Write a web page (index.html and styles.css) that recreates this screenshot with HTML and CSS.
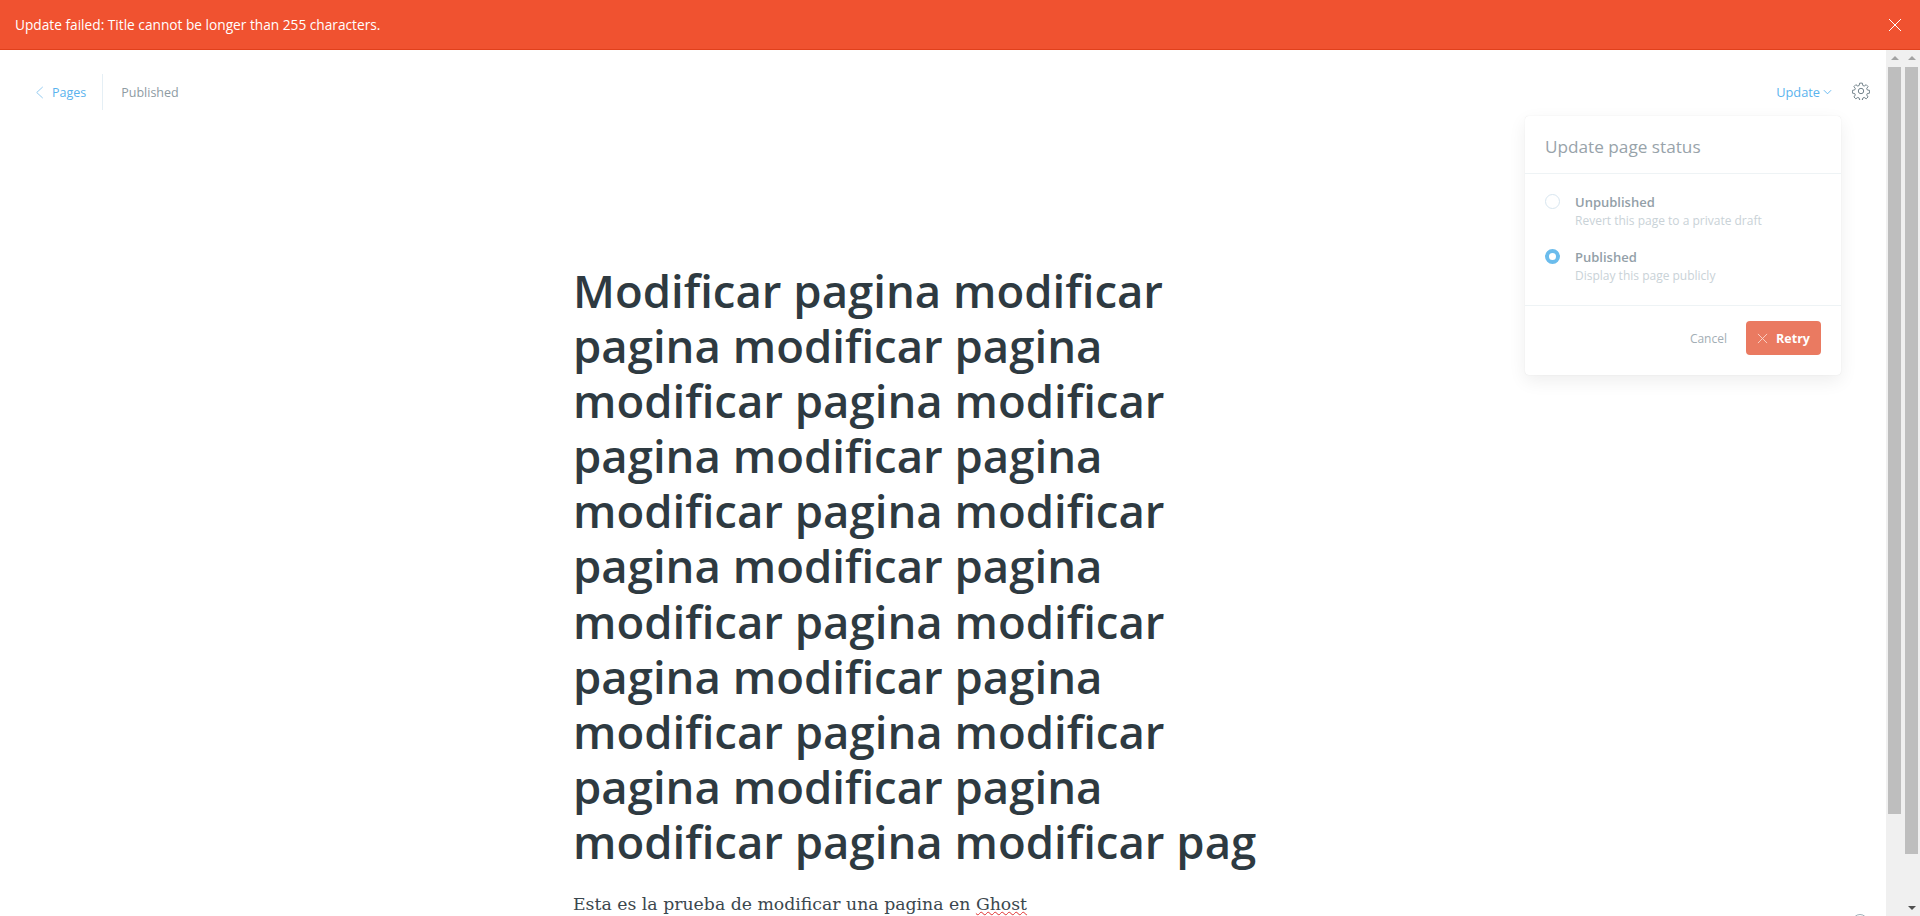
FILE: index.html
```html
<!DOCTYPE html>
<html lang="en">
<head>
    <meta charset="UTF-8">
    <meta name="viewport" content="width=device-width, initial-scale=1.0">
    <title>Edit page</title>
    <link rel="stylesheet" href="styles.css">
</head>
<body>
    <div class="alert">
        <span class="alert-text">Update failed: Title cannot be longer than 255 characters.</span>
        <svg class="alert-close" viewBox="0 0 14 14"><path d="M1 1l12 12M13 1L1 13"/></svg>
    </div>

    <div class="workspace">
        <main class="editor">
            <header class="editor-bar">
                <div class="crumbs">
                    <a class="back-link" href="#">
                        <svg class="back-icon" viewBox="0 0 9 14"><path d="M8 1L1.5 7 8 13"/></svg>
                        Pages
                    </a>
                    <span class="status">Published</span>
                </div>
                <div class="actions">
                    <a class="update-link" href="#">
                        Update
                        <svg class="update-icon" viewBox="0 0 10 6"><path d="M1 1l4 4 4-4"/></svg>
                    </a>
                    <svg class="gear" viewBox="0 0 24 24">
                        <circle cx="12" cy="12" r="3.6"/>
                        <path d="M10.2 1.5h3.6l.6 3.1 1.9.8 2.6-1.8 2.5 2.5-1.8 2.6.8 1.9 3.1.6v3.6l-3.1.6-.8 1.9 1.8 2.6-2.5 2.5-2.6-1.8-1.9.8-.6 3.1h-3.6l-.6-3.1-1.9-.8-2.6 1.8-2.5-2.5 1.8-2.6-.8-1.9-3.1-.6v-3.6l3.1-.6.8-1.9-1.8-2.6 2.5-2.5 2.6 1.8 1.9-.8z"/>
                    </svg>
                </div>
            </header>

            <article class="page-body">
                <h1 class="page-title">Modificar pagina modificar pagina modificar pagina modificar pagina modificar pagina modificar pagina modificar pagina modificar pagina modificar pagina modificar pagina modificar pagina modificar pagina modificar pagina modificar pagina modificar pagina modificar pagina modificar pag</h1>
                <p class="page-text">Esta es la prueba de modificar una pagina en <span class="misspelled">Ghost</span></p>
            </article>

            <section class="publish-menu">
                <h2 class="publish-title">Update page status</h2>
                <div class="publish-options">
                    <div class="option">
                        <span class="radio"></span>
                        <div>
                            <div class="option-name">Unpublished</div>
                            <div class="option-desc">Revert this page to a private draft</div>
                        </div>
                    </div>
                    <div class="option">
                        <span class="radio radio-on"></span>
                        <div>
                            <div class="option-name">Published</div>
                            <div class="option-desc">Display this page publicly</div>
                        </div>
                    </div>
                </div>
                <div class="publish-footer">
                    <button class="btn-cancel">Cancel</button>
                    <button class="btn-retry">
                        <svg class="retry-icon" viewBox="0 0 12 12"><path d="M1 1l10 10M11 1L1 11"/></svg>
                        Retry
                    </button>
                </div>
            </section>

            <span class="help-dot"></span>
        </main>

        <div class="scrollbars">
            <div class="scrollbar">
                <span class="arrow-up"></span>
                <div class="thumb thumb-short"></div>
            </div>
            <div class="scrollbar">
                <span class="arrow-up"></span>
                <div class="thumb thumb-long"></div>
                <span class="arrow-down"></span>
            </div>
        </div>
    </div>
</body>
</html>
```

FILE: styles.css
```css
html, body {
    margin: 0;
    height: 100%;
    overflow: hidden;
}
body {
    font-family: "Open Sans", "Noto Sans", sans-serif;
    background-color: white;
    color: #2e3a41;
}
a {
    text-decoration: none;
}

/* red banner */
.alert {
    height: 49px;
    background-color: #f05230;
    border-bottom: 1px solid #e0401c;
    display: flex;
    align-items: center;
    justify-content: space-between;
    padding: 0 18px 0 15px;
    color: white;
    font-size: 13.7px;
}
.alert-close {
    width: 14px;
    height: 14px;
    fill: none;
    stroke: white;
    stroke-width: 1;
}

.workspace {
    display: flex;
    height: 866px;
}
.editor {
    flex: 1;
    position: relative;
    overflow: hidden;
}

/* top bar */
.editor-bar {
    display: flex;
    justify-content: space-between;
    align-items: center;
    height: 36px;
    padding: 24px 16px 0 35px;
    font-size: 12.5px;
}
.crumbs {
    display: flex;
    align-items: center;
    height: 36px;
}
.back-link {
    display: flex;
    align-items: center;
    gap: 8px;
    color: #5ab3ee;
    padding-right: 16px;
    height: 36px;
    border-right: 1px solid #e5eff5;
}
.back-icon {
    width: 9px;
    height: 13px;
    fill: none;
    stroke: #8cc8f0;
    stroke-width: 1;
}
.status {
    margin-left: 18px;
    color: #8e9ba3;
}
.actions {
    display: flex;
    align-items: center;
    gap: 20px;
}
.update-link {
    display: flex;
    align-items: center;
    gap: 3px;
    color: #5ab3ee;
    font-size: 12.8px;
}
.update-icon {
    width: 9px;
    height: 6px;
    fill: none;
    stroke: #5ab3ee;
    stroke-width: 1;
}
.gear {
    width: 18px;
    height: 18px;
    fill: none;
    stroke: #6f7f88;
    stroke-width: 1.3;
    margin-top: -3px;
}

/* content */
.page-body {
    width: 740px;
    margin: 0 auto;
    padding-top: 153px;
}
.page-title {
    margin: 0;
    font-size: 45.5px;
    font-weight: 600;
    line-height: 55.1px;
    color: #2e3a41;
}
.page-text {
    margin: 25px 0 0;
    font-family: "DejaVu Serif", serif;
    font-size: 17.3px;
    color: #3b474e;
}
.misspelled {
    text-decoration: underline wavy #e03030 1px;
}

/* publish dropdown */
.publish-menu {
    position: absolute;
    top: 66px;
    left: 1525px;
    width: 316px;
    height: 259px;
    background-color: white;
    border-radius: 4px;
    box-shadow: 0 0 1px rgba(0,0,0,0.12), 0 6px 18px rgba(0,0,0,0.07);
    color: #8e9ba3;
}
.publish-title {
    margin: 0;
    height: 58px;
    padding-left: 20px;
    line-height: 62px;
    font-size: 17.2px;
    font-weight: 400;
    color: #98a3aa;
    border-bottom: 1px solid #eef3f5;
    box-sizing: border-box;
}
.publish-options {
    height: 132px;
    padding: 20px 20px 0;
    box-sizing: border-box;
    border-bottom: 1px solid #eef3f5;
}
.option {
    display: flex;
    gap: 15px;
    height: 55px;
}
.radio {
    width: 15px;
    height: 15px;
    border-radius: 50%;
    border: 1px solid #d8e6f0;
    box-sizing: border-box;
}
.radio-on {
    border: 4px solid #6bbcec;
}
.option-name {
    font-size: 13px;
    font-weight: 600;
    line-height: 16px;
    margin-bottom: 2px;
    color: #93a0a8;
}
.option-desc {
    font-size: 12px;
    line-height: 18px;
    color: #c9d2d7;
}
.publish-footer {
    display: flex;
    justify-content: flex-end;
    align-items: center;
    gap: 19px;
    padding: 15px 20px 0;
}
.btn-cancel {
    padding: 0;
    border: none;
    background: none;
    font-family: inherit;
    font-size: 12px;
    color: #a3aeb5;
}
.btn-retry {
    display: flex;
    align-items: center;
    justify-content: center;
    gap: 8px;
    width: 75px;
    height: 34px;
    padding: 0;
    border: none;
    border-radius: 4px;
    background-color: #ea7a61;
    color: white;
    font-family: inherit;
    font-size: 12.5px;
    font-weight: 700;
}
.retry-icon {
    width: 11px;
    height: 11px;
    fill: none;
    stroke: #fbd5cc;
    stroke-width: 1;
}
.help-dot {
    position: absolute;
    top: 864px;
    left: 1852px;
    width: 14px;
    height: 14px;
    border: 1px solid #9fb0b8;
    border-radius: 50%;
}

/* the two browser scrollbars */
.scrollbars {
    width: 34px;
    display: flex;
    gap: 4px;
    padding: 0 2px 0 2px;
    box-sizing: border-box;
    background-color: #f0f0f0;
}
.scrollbar {
    flex: 1;
    display: flex;
    flex-direction: column;
    align-items: center;
    padding-top: 6px;
}
.arrow-up, .arrow-down {
    width: 0;
    height: 0;
    border-left: 4px solid transparent;
    border-right: 4px solid transparent;
}
.arrow-up {
    border-bottom: 4px solid #a3a3a3;
}
.arrow-down {
    border-top: 4px solid #505050;
    margin-top: 52px;
}
.thumb {
    width: 100%;
    margin-top: 7px;
    background-color: #bebebe;
}
.thumb-short {
    height: 747px;
}
.thumb-long {
    height: 787px;
}
```
